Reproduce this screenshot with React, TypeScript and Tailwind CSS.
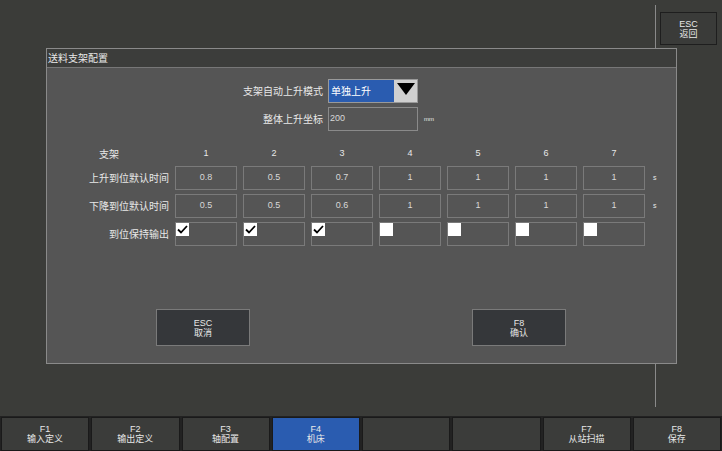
const F = { fontFamily: '"Liberation Sans","Noto Sans CJK SC",sans-serif' };
const up = ["0.8", "0.5", "0.7", "1", "1", "1", "1"];
const down = ["0.5", "0.5", "0.6", "1", "1", "1", "1"];
const chk = [true, true, true, false, false, false, false];
const fkeys = [["F1", "输入定义"], ["F2", "输出定义"], ["F3", "轴配置"], ["F4", "机床"], ["", ""], ["", ""], ["F7", "从站扫描"], ["F8", "保存"]];

function Cell({ v }: { v: string }) {
  return <div className="w-[62px] h-[24px] border border-[#7a7a7a] flex items-center justify-center text-[9px] text-[#d8d8d8]">{v}</div>;
}

export default function App() {
  return (
    <div style={F} className="relative w-[722px] h-[451px] bg-[#3b3c39] overflow-hidden text-[#e8e8e8]">
      <div className="absolute left-[655px] top-[5px] w-[1px] h-[101px] bg-[#8a8a8a]" />
      <div className="absolute left-[655px] top-[363px] w-[1px] h-[44px] bg-[#8a8a8a]" />
      <div className="absolute left-[660px] top-[12px] w-[57px] h-[33px] border border-[#1e1e1e] bg-[#3a3b39] flex flex-col items-center justify-center text-[9px] leading-[10px]">
        <span>ESC</span><span>返回</span>
      </div>
      <div className="absolute left-[46px] top-[48px] w-[631px] h-[316px] border border-[#8a8a8a] bg-[#555555] flex flex-col">
        <div className="h-[19px] bg-[#3c3d3b] border-b border-[#777] px-[1px] flex items-center text-[10px]">送料支架配置</div>
        <div className="relative flex-1">
          <div className="absolute left-[196px] top-[11px] flex items-center gap-[5px] text-[10px]">
            <span className="w-[80px] text-right">支架自动上升模式</span>
            <div className="flex h-[24px] w-[90px] border border-[#999]">
              <div className="flex-1 bg-[#2a5cb0] flex items-center pl-[2px] text-white">单独上升</div>
              <div className="w-[23px] bg-[#d0d0d0] flex items-start justify-center pt-[3px]">
                <div className="w-0 h-0 border-l-[9px] border-r-[9px] border-t-[12px] border-l-transparent border-r-transparent border-t-black" />
              </div>
            </div>
          </div>
          <div className="absolute left-[196px] top-[39px] flex items-center gap-[5px] text-[10px]">
            <span className="w-[80px] text-right">整体上升坐标</span>
            <div className="h-[24px] w-[90px] border border-[#8a8a8a] flex items-center pl-[1px] text-[9px] text-[#d8d8d8]">200</div>
            <span className="ml-[1px] text-[6px]">mm</span>
          </div>
          <div className="absolute left-[0px] top-[78px] flex flex-col gap-[4px] text-[10px]">
            <div className="flex items-center gap-[6px] h-[16px]">
              <span className="w-[122px] pl-[52px]">支架</span>
              {[1, 2, 3, 4, 5, 6, 7].map(n => <span key={n} className="w-[62px] text-center text-[9px]">{n}</span>)}
            </div>
            <div className="flex items-center gap-[6px]">
              <span className="w-[122px] text-right">上升到位默认时间</span>
              {up.map((v, i) => <Cell key={i} v={v} />)}
              <span className="text-[7px] ml-[2px]">s</span>
            </div>
            <div className="flex items-center gap-[6px]">
              <span className="w-[122px] text-right">下降到位默认时间</span>
              {down.map((v, i) => <Cell key={i} v={v} />)}
              <span className="text-[7px] ml-[2px]">s</span>
            </div>
            <div className="flex items-center gap-[6px]">
              <span className="w-[122px] text-right">到位保持输出</span>
              {chk.map((c, i) => (
                <div key={i} className="relative w-[62px] h-[24px] border border-[#7a7a7a]">
                  <div className="absolute left-0 top-0 w-[13px] h-[13px] bg-white flex items-center justify-center">
                    {c && <svg width="11" height="11" viewBox="0 0 11 11"><path d="M1 5.5 L4 8.5 L10 2" stroke="black" strokeWidth="1.8" fill="none" /></svg>}
                  </div>
                </div>
              ))}
            </div>
          </div>
          <div className="absolute left-[109px] top-[241px] w-[94px] h-[37px] bg-[#35373a] border border-[#7a7a7a] flex flex-col items-center justify-center text-[9px] leading-[10px]"><span>ESC</span><span>取消</span></div>
          <div className="absolute left-[425px] top-[241px] w-[94px] h-[37px] bg-[#35373a] border border-[#7a7a7a] flex flex-col items-center justify-center text-[9px] leading-[10px]"><span>F8</span><span>确认</span></div>
        </div>
      </div>
      <div className="absolute left-0 bottom-0 w-full h-[35px] bg-[#222] flex gap-[2px] px-[1px] pt-[1px]">
        {fkeys.map(([k, t], i) => (
          <div key={i} className={`flex-1 flex flex-col items-center justify-center text-[9px] leading-[10px] border border-[#1a1a1a] ${i === 3 ? "bg-[#2a5cb0]" : "bg-[#3b3c3a]"}`}>
            <span>{k}</span><span>{t}</span>
          </div>
        ))}
      </div>
    </div>
  );
}
